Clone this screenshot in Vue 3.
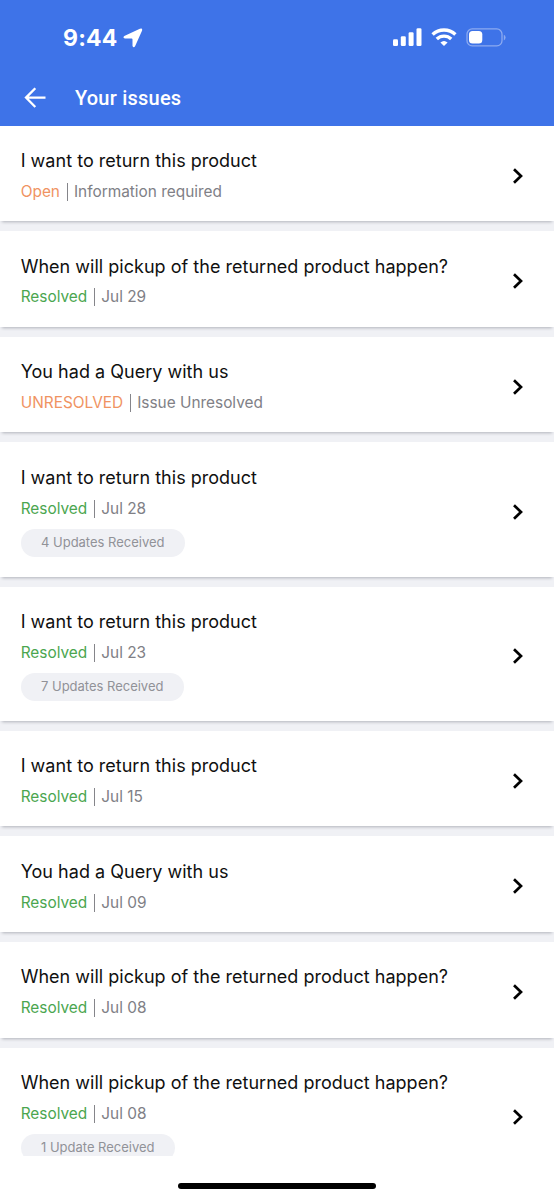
<script setup>
const issues = [
  { title: 'I want to return this product', status: 'Open', tone: 'open', detail: 'Information required' },
  { title: 'When will pickup of the returned product happen?', status: 'Resolved', tone: 'resolved', detail: 'Jul 29' },
  { title: 'You had a Query with us', status: 'UNRESOLVED', tone: 'open', detail: 'Issue Unresolved' },
  { title: 'I want to return this product', status: 'Resolved', tone: 'resolved', detail: 'Jul 28', updates: '4 Updates Received' },
  { title: 'I want to return this product', status: 'Resolved', tone: 'resolved', detail: 'Jul 23', updates: '7 Updates Received' },
  { title: 'I want to return this product', status: 'Resolved', tone: 'resolved', detail: 'Jul 15' },
  { title: 'You had a Query with us', status: 'Resolved', tone: 'resolved', detail: 'Jul 09' },
  { title: 'When will pickup of the returned product happen?', status: 'Resolved', tone: 'resolved', detail: 'Jul 08' },
  { title: 'When will pickup of the returned product happen?', status: 'Resolved', tone: 'resolved', detail: 'Jul 08', updates: '1 Update Received' },
]
</script>

<template>
  <div class="screen">
    <header class="header">
      <div class="status-bar">
        <span class="time">9:44</span>
        <svg class="location" width="20" height="20" viewBox="0 0 20 20">
          <path d="M1.3 7.9 16.9 .8Q19.9-.2 19 2.8L12.2 18Q10.7 20.4 9.5 18V11.4Q9.5 10.5 8.6 10.5H2Q-.7 9.7 1.3 7.9Z" fill="#fff" />
        </svg>
        <svg class="signal" width="29" height="19" viewBox="0 0 29 19" fill="#fff">
          <rect x="0" y="11.2" width="5" height="6.8" rx="1.3" />
          <rect x="7.8" y="8.2" width="5" height="9.8" rx="1.3" />
          <rect x="15.6" y="4.3" width="5" height="13.7" rx="1.3" />
          <rect x="23.5" y="0.2" width="5" height="17.8" rx="1.3" />
        </svg>
        <svg class="wifi" width="26" height="19" viewBox="0 0 26 19" fill="none" stroke="#fff" stroke-width="3.4">
          <path d="M1.6 6.5A16.5 16.5 0 0 1 24.4 6.5" />
          <path d="M5.8 11A10.4 10.4 0 0 1 20.2 11" />
          <path d="M9.4 14.6Q13 11.3 16.6 14.6L13 18.1Z" fill="#fff" stroke="none" />
        </svg>
        <svg class="battery" width="41" height="20" viewBox="0 0 41 20">
          <rect x="1" y="0.9" width="35" height="17" rx="5.2" fill="none" stroke="#8caaf0" stroke-width="1.3" />
          <rect x="3" y="3" width="13.3" height="12.6" rx="3.5" fill="#fff" />
          <path d="M37.8 6.7V12.4Q39.6 11.7 39.6 9.5T37.8 6.7Z" fill="#8caaf0" />
        </svg>
      </div>
      <div class="title-bar">
        <svg class="back" width="22" height="22" viewBox="0 0 22 22" fill="none" stroke="#fff" stroke-width="2.3">
          <path d="M21.5 10.6H2.4M11.3 1.2 2 10.6 11.3 20" />
        </svg>
        <h1>Your issues</h1>
      </div>
    </header>

    <main class="list">
      <article v-for="(issue, i) in issues" :key="i" class="card" :class="{ tall: issue.updates }">
        <div class="content">
          <h2>{{ issue.title }}</h2>
          <div class="meta">
            <span :class="issue.tone">{{ issue.status }}</span>
            <span class="divider"></span>
            <span>{{ issue.detail }}</span>
          </div>
          <span v-if="issue.updates" class="updates">{{ issue.updates }}</span>
        </div>
        <svg class="chevron" width="12" height="18" viewBox="0 0 12 18" fill="none" stroke="#000" stroke-width="2.7">
          <path d="M2 2.2 9 9 2 15.8" />
        </svg>
      </article>
    </main>

    <footer class="home-area"><div class="home-indicator"></div></footer>
  </div>
</template>

<style>
body { margin: 0; background: #fff; }
</style>

<style scoped>
.screen {
  display: flex;
  flex-direction: column;
  width: 554px;
  height: 1200px;
  overflow: hidden;
  background: #fff;
  font-family: Inter, "Liberation Sans", sans-serif;
}
.header {
  flex: none;
  box-sizing: border-box;
  height: 125.6px;
  background: #3e73e8;
  color: #fff;
}
.status-bar {
  display: flex;
  align-items: flex-start;
  box-sizing: border-box;
  height: 70px;
  padding: 28px 47.5px 0 63px;
}
.time {
  width: 60px;
  line-height: 20px;
  font-size: 23px;
  font-weight: 700;
  letter-spacing: 0.2px;
  white-space: nowrap;
}
.location { flex: none; }
.signal { margin-left: auto; }
.wifi { margin-left: 9px; }
.battery { margin-left: 9px; }
.title-bar {
  display: flex;
  align-items: center;
  height: 55px;
  padding-left: 24px;
}
h1 {
  margin: 0 0 0 29px;
  font: 500 20px/24px Roboto, sans-serif;
  letter-spacing: 0.22px;
}
.list {
  flex: none;
  display: flex;
  flex-direction: column;
  gap: 10px;
  height: 1030.4px;
  overflow: hidden;
  background: #f0f1f5;
}
.card {
  flex: none;
  display: flex;
  align-items: center;
  justify-content: space-between;
  box-sizing: border-box;
  height: 95.6px;
  padding: 0 30px 0 20.7px;
  background: #fff;
  box-shadow: 0 3px 3px -2px #b0b3ba;
}
.card.tall { height: 134.2px; }
.chevron { margin-top: 4.6px; }
.content {
  align-self: flex-start;
  display: flex;
  flex-direction: column;
  align-items: flex-start;
  padding-top: 23.4px;
}
h2 {
  margin: 0;
  color: #101010;
  font-size: 18px;
  font-weight: 400;
  line-height: 24px;
  letter-spacing: 0.02px;
  white-space: nowrap;
}
.meta {
  display: flex;
  align-items: center;
  height: 20px;
  margin-top: 8.8px;
  color: #808086;
  font-size: 15.4px;
  font-weight: 400;
  line-height: 20px;
  white-space: nowrap;
}
.open { color: #f09362; }
.resolved { color: #4ba64f; }
.divider {
  width: 1px;
  height: 18px;
  margin: 0 6px 0 7px;
  background: #85858a;
}
.updates {
  box-sizing: border-box;
  height: 28px;
  margin-top: 10.5px;
  padding: 0 20.3px;
  border-radius: 14px;
  background: #f0f1f5;
  color: #919298;
  font-size: 13px;
  line-height: 27px;
  letter-spacing: -0.01px;
  white-space: nowrap;
}
.home-area {
  flex: 1;
  display: flex;
  justify-content: center;
  background: #fff;
}
.home-indicator {
  width: 198px;
  height: 6px;
  margin-top: 27.5px;
  border-radius: 3px;
  background: #000;
}
</style>
